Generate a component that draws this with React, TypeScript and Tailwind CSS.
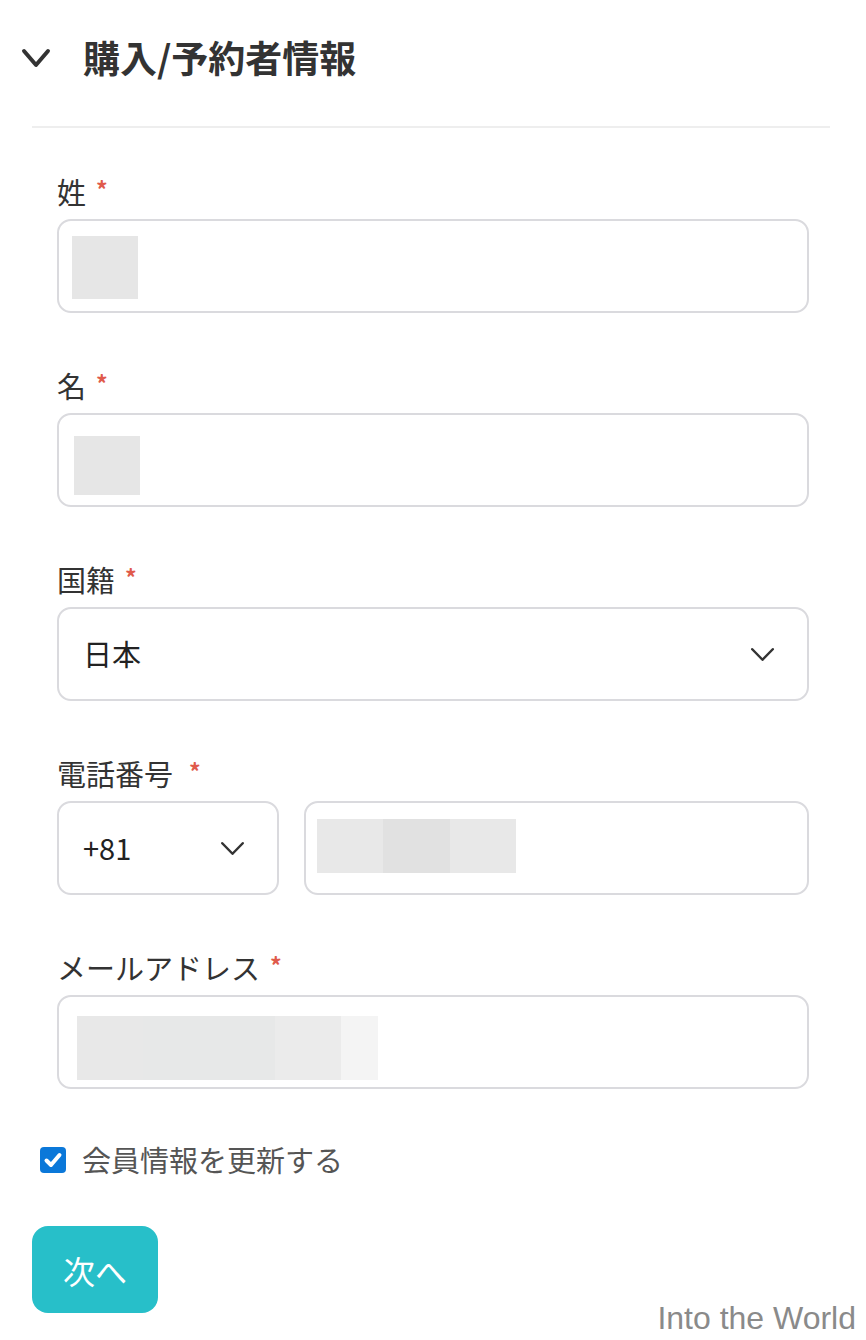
import React from 'react';

const font = { fontFamily: '"Noto Sans CJK JP", "Noto Sans", sans-serif' };

const Chevron: React.FC<{ w: number; h: number; stroke: number; className?: string }> = ({ w, h, stroke, className }) => (
  <svg width={w} height={h} viewBox={`0 0 ${w} ${h}`} className={className} fill="none">
    <polyline
      points={`${stroke / 2 + 1},${stroke / 2 + 1} ${w / 2},${h - stroke / 2 - 1} ${w - stroke / 2 - 1},${stroke / 2 + 1}`}
      stroke="#333"
      strokeWidth={stroke}
      strokeLinecap="round"
      strokeLinejoin="round"
    />
  </svg>
);

const Label: React.FC<{ text: string; gap?: string }> = ({ text, gap = 'ml-[10px]' }) => (
  <div className="flex items-start h-[40px] mb-[8px] text-[29px] leading-[40px] text-[#333]">
    <span>{text}</span>
    <span className={`${gap} mt-[4px] text-[23px] leading-[28px] font-bold text-[#e05a4b]`}>*</span>
  </div>
);

const Field: React.FC<{ className?: string; children?: React.ReactNode }> = ({ className = '', children }) => (
  <div className={`h-[94px] border-2 border-[#dadade] rounded-[14px] bg-white ${className}`}>{children}</div>
);

export default function App() {
  return (
    <div className="relative w-[866px] min-h-[1340px] bg-white overflow-hidden" style={font}>
      <div className="h-[116px] flex items-center pl-[21px]">
        <Chevron w={30} h={20} stroke={4} />
        <h1 className="ml-[32px] text-[37px] font-bold text-[#333]">購入/予約者情報</h1>
      </div>
      <div className="mt-[10px] ml-[32px] mr-[36px] h-[2px] bg-[#eeeeee]" />

      <div className="px-[57px] pt-[43px] flex flex-col gap-[52px]">
        <div>
          <Label text="姓" />
          <Field className="pl-[13px] pt-[15px]">
            <div className="w-[66px] h-[63px] bg-[#e6e6e6]" />
          </Field>
        </div>
        <div>
          <Label text="名" />
          <Field className="pl-[15px] pt-[21px]">
            <div className="w-[66px] h-[59px] bg-[#e6e6e6]" />
          </Field>
        </div>
        <div>
          <Label text="国籍" />
          <Field className="flex items-center justify-between pl-[24px] pr-[32px]">
            <span className="text-[29px] text-[#222]">日本</span>
            <Chevron w={25} h={15} stroke={2.5} />
          </Field>
        </div>
        <div>
          <Label text="電話番号" gap="ml-[16px]" />
          <div className="flex gap-[25px]">
            <Field className="w-[222px] shrink-0 flex items-center justify-between pl-[24px] pr-[32px]">
              <span className="text-[29px] text-[#222]">+81</span>
              <Chevron w={25} h={15} stroke={2.5} />
            </Field>
            <Field className="flex-1 pl-[11px] pt-[16px]">
              <div className="flex h-[54px]">
                <div className="w-[66px] bg-[#e8e8e8]" />
                <div className="w-[67px] bg-[#e1e1e1]" />
                <div className="w-[66px] bg-[#e8e8e8]" />
              </div>
            </Field>
          </div>
        </div>
        <div>
          <Label text="メールアドレス" />
          <Field className="pl-[18px] pt-[19px]">
            <div className="flex h-[64px]">
              <div className="w-[66px] bg-[#e8e8e8]" />
              <div className="w-[132px] bg-[#e7e8e8]" />
              <div className="w-[66px] bg-[#ebebeb]" />
              <div className="w-[37px] bg-[#f4f4f4]" />
            </div>
          </Field>
        </div>
      </div>

      <div className="mt-[51px] pl-[40px] h-[40px] flex items-center">
        <div className="w-[26px] h-[26px] rounded-[4px] bg-[#0b78d9] flex items-center justify-center">
          <svg width="20" height="20" viewBox="0 0 20 20" fill="none">
            <polyline points="3.5,10.5 8,15 16.5,5" stroke="white" strokeWidth="4" strokeLinecap="round" strokeLinejoin="round" />
          </svg>
        </div>
        <span className="ml-[16px] text-[29px] text-[#555]">会員情報を更新する</span>
      </div>

      <div className="mt-[46px] pl-[32px]">
        <button className="w-[126px] h-[87px] rounded-[16px] bg-[#27bfc9] text-white text-[32px] flex items-center justify-center">
          次へ
        </button>
      </div>

      <div
        className="absolute right-[10px] bottom-[3px] text-[32px] leading-[38px] text-[#8a8a8a]"
        style={{ fontFamily: '"Liberation Sans", Arial, sans-serif' }}
      >
        Into the World
      </div>
    </div>
  );
}
